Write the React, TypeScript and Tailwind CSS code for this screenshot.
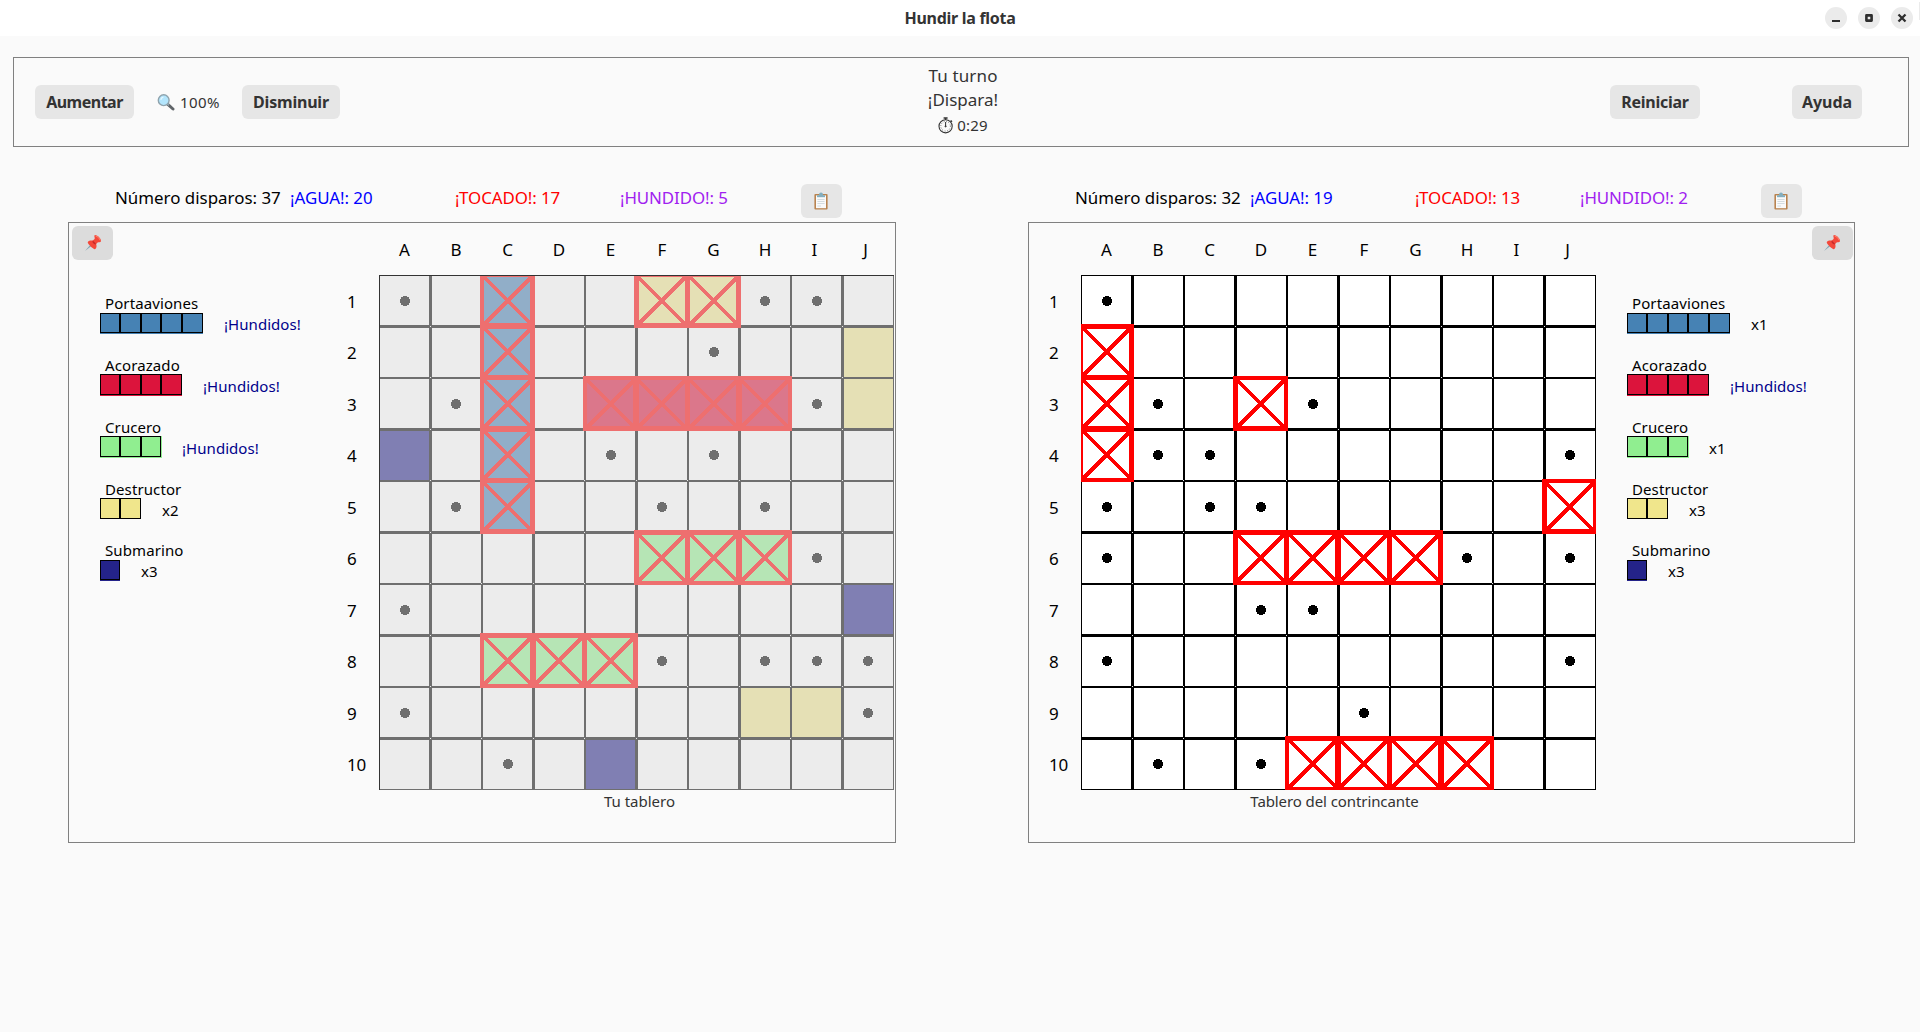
import React from "react";

type Ship = { name: string; size: number; color: string; status: string };

const COLS = ["A", "B", "C", "D", "E", "F", "G", "H", "I", "J"];
const ROWS = ["1", "2", "3", "4", "5", "6", "7", "8", "9", "10"];
const TRACKS = "grid-cols-[52px_51px_52px_51px_52px_51px_52px_51px_52px_51px]";
const ROW_TRACKS = "grid-rows-[52px_51px_52px_51px_52px_51px_52px_51px_52px_51px]";

const OWN_FILL: Record<string, string> = {
  C1: "bg-[#91aec8]", C2: "bg-[#91aec8]", C3: "bg-[#91aec8]", C4: "bg-[#91aec8]", C5: "bg-[#91aec8]",
  E3: "bg-[#db778b]", F3: "bg-[#db778b]", G3: "bg-[#db778b]", H3: "bg-[#db778b]",
  F1: "bg-[#e5e0b5]", G1: "bg-[#e5e0b5]", J2: "bg-[#e5e0b5]", J3: "bg-[#e5e0b5]",
  H9: "bg-[#e5e0b5]", I9: "bg-[#e5e0b5]",
  F6: "bg-[#b6e5b5]", G6: "bg-[#b6e5b5]", H6: "bg-[#b6e5b5]",
  C8: "bg-[#b6e5b5]", D8: "bg-[#b6e5b5]", E8: "bg-[#b6e5b5]",
  A4: "bg-[#807fb3]", J7: "bg-[#807fb3]", E10: "bg-[#807fb3]",
};
const OWN_HITS = "C1 C2 C3 C4 C5 F1 G1 E3 F3 G3 H3 F6 G6 H6 C8 D8 E8".split(" ");
const OWN_MISSES = "A1 H1 I1 G2 B3 I3 E4 G4 B5 F5 H5 I6 A7 F8 H8 I8 J8 A9 J9 C10".split(" ");
const RIVAL_HITS = "A2 A3 A4 D3 J5 D6 E6 F6 G6 E10 F10 G10 H10".split(" ");
const RIVAL_MISSES = "A1 B3 E3 B4 C4 J4 A5 C5 D5 A6 H6 J6 D7 E7 A8 J8 F9 B10 D10".split(" ");

const fleet = (s: string[]): Ship[] => [
  { name: "Portaaviones", size: 5, color: "bg-[#4682b4]", status: s[0] },
  { name: "Acorazado", size: 4, color: "bg-[#dc143c]", status: s[1] },
  { name: "Crucero", size: 3, color: "bg-[#90ee90]", status: s[2] },
  { name: "Destructor", size: 2, color: "bg-[#f0e68c]", status: s[3] },
  { name: "Submarino", size: 1, color: "bg-[#242389]", status: s[4] },
];

function PinIcon() {
  return (
    <svg width="18" height="18" viewBox="0 0 18 18">
      <path d="M6.8 10.2 L8 11.4 L1 17 Z" fill="#7fa3b3" />
      <path d="M10.6 1.2 C12.5 .2 17.6 4.6 17 7.2 C16.4 8.6 14.6 7.8 13.6 8.4 L12.2 10 C13 12.4 12.4 14.6 10.9 15.3 C9 14.8 4 10.4 3.7 8.2 C4.2 6.6 6.6 6.2 8.8 6.6 L10.6 5 C11.2 3.6 9.8 2.4 10.6 1.2Z" fill="#f4483a" />
      <path d="M8.8 6.6 L12.2 10 C11 11.4 7.4 8.6 8.8 6.6Z" fill="#c62828" />
      <path d="M11.6 2 C13.2 2 16 4.8 16.2 6.4" stroke="#ff8a75" strokeWidth="1" fill="none" />
    </svg>
  );
}

function ClipboardIcon() {
  return (
    <svg width="14" height="18" viewBox="0 0 14 18">
      <rect x=".4" y="2" width="13.2" height="15.6" rx="1" fill="#b9834f" />
      <rect x="2" y="3.4" width="10" height="12.8" fill="#fafafa" />
      <path d="M3 3.2h8v2H3z" fill="#82aebf" />
      <path d="M5 2.4a2 2 0 0 1 4 0v1.4H5z" fill="#82aebf" />
      <path d="M3.4 7.5h7.2M3.4 9.5h7.2M3.4 11.5h7.2M3.4 14h3.6" stroke="#cfd8dc" strokeWidth=".9" />
    </svg>
  );
}

function SearchIcon() {
  return (
    <svg width="18" height="17" viewBox="0 0 18 17">
      <path d="M10.6 10.2 L16 15" stroke="#5f6468" strokeWidth="3" strokeLinecap="round" />
      <path d="M10 9.6 L12 11.4" stroke="#90a4ae" strokeWidth="1.6" />
      <circle cx="6.7" cy="6.2" r="5.4" fill="#b3e5fc" stroke="#8fa3ad" strokeWidth="1.4" />
      <path d="M3.8 5.8 A3 3 0 0 1 6.4 3.2" stroke="#e8f8ff" strokeWidth="1.2" fill="none" />
    </svg>
  );
}

function StopwatchIcon() {
  return (
    <svg width="16" height="17" viewBox="0 0 16 17" fill="none" stroke="#333">
      <circle cx="7.6" cy="9.3" r="6.6" strokeWidth="1.1" />
      <path d="M5.6 1h4M7.6 1v2M12.6 3.4l1.4 1.3" strokeWidth="1.4" />
      <path d="M7.6 5v4.8" strokeWidth="1" />
      <circle cx="7.6" cy="9.3" r=".6" strokeWidth="1" />
      <circle cx="7.6" cy="9.3" r="4.8" strokeWidth=".9" strokeDasharray=".7 1.82" />
    </svg>
  );
}

function Button({ children, className }: { children: React.ReactNode; className: string }) {
  return (
    <button className={`flex h-[34px] items-center justify-center rounded-[6px] text-[16px] font-bold text-[#333] ${className}`}>
      {children}
    </button>
  );
}

function Cell({ c, r, fill, hit, miss, own }: { c: number; r: number; fill: string; hit: boolean; miss: boolean; own: boolean }) {
  const oddC = c % 2 === 1;
  const oddR = r % 2 === 1;
  const mark = own ? "#ee6f6f" : "#ff0000";
  return (
    <div
      className={`relative border-t border-l ${oddC ? "border-r" : "border-r-2"} ${oddR ? "border-b" : "border-b-2"} ${own ? "border-[#6f6f6f]" : "border-black"} ${fill} ${hit ? "z-10" : ""}`}
    >
      {c < 9 && r < 9 && (
        <span
          className={`absolute bg-[#ececec] ${oddC ? "-right-[2px] w-[2px]" : "-right-[2px] w-px"} ${oddR ? "-bottom-[2px] h-[2px]" : "-bottom-[2px] h-px"}`}
        />
      )}
      {miss && (
        <svg
          className={`absolute ${oddC ? "left-[19px]" : "left-[20px]"} ${oddR ? "top-[19px]" : "top-[20px]"}`}
          width="10" height="10" viewBox="0 0 10 10" shapeRendering="crispEdges"
        >
          <circle cx="5" cy="5" r="5.1" fill={own ? "#6f6f6f" : "#000"} />
        </svg>
      )}
      {hit && (
        <svg
          className={`absolute max-w-none ${oddC ? "-left-[4px]" : "-left-[3px]"} ${oddR ? "-top-[4px]" : "-top-[3px]"}`}
          width="55" height="55" viewBox="0 0 55 55" shapeRendering="crispEdges"
        >
          <path
            fillRule="evenodd" fill={mark}
            d={`M0 0H55V55H0Z M${oddC ? 5 : 4} ${oddR ? 5 : 4}V${oddR ? 51 : 50}H${oddC ? 51 : 50}V${oddR ? 5 : 4}Z`}
          />
          <path d="M2.5 2.5L53 53M53 2.5L2.5 53" stroke={mark} strokeWidth="3.6" />
        </svg>
      )}
    </div>
  );
}

const labelShift = (c: string) => (c === "I" ? "pr-[5px]" : c === "J" ? "pr-[6px]" : "pr-px");

function Board({ own, caption }: { own: boolean; caption: string }) {
  const hits = own ? OWN_HITS : RIVAL_HITS;
  const misses = own ? OWN_MISSES : RIVAL_MISSES;
  return (
    <div className="flex shrink-0">
      <div className={`grid w-8 shrink-0 pt-[52px] text-[17px] tracking-[-0.2px] ${ROW_TRACKS}`}>
        {ROWS.map((r) => (
          <div key={r} className="flex items-center leading-none">{r}</div>
        ))}
      </div>
      <div className="flex w-[515px] flex-col">
        <div className={`grid h-[52px] shrink-0 text-[17px] ${TRACKS}`}>
          {COLS.map((c) => (
            <div key={c} className={`flex items-center justify-center leading-none ${labelShift(c)}`}>{c}</div>
          ))}
        </div>
        <div className={`relative grid h-[515px] w-[515px] shrink-0 overflow-hidden ${TRACKS} ${ROW_TRACKS}`}>
          {ROWS.map((r, ri) =>
            COLS.map((c, ci) => (
              <Cell
                key={c + r} c={ci} r={ri} own={own}
                fill={own ? OWN_FILL[c + r] ?? "bg-[#ececec]" : "bg-white"}
                hit={hits.includes(c + r)} miss={misses.includes(c + r)}
              />
            ))
          )}
          {own && <div className="pointer-events-none absolute inset-0 z-20 border-t border-l border-[#333]" />}
        </div>
        <div className={`mt-px text-center text-[15px] leading-5 text-[#333] ${own ? "pl-[6px]" : "pr-[8px] tracking-[-0.09px]"}`}>
          {caption}
        </div>
      </div>
    </div>
  );
}

const SEG_W = ["w-5", "w-[21px]", "w-5", "w-[21px]", "w-[21px]"];

function Legend({ ships }: { ships: Ship[] }) {
  return (
    <div className="flex flex-col">
      {ships.map((s, i) => {
        const short = i === 0 || i === 4;
        return (
          <div key={s.name} className={`flex flex-col ${i === 0 ? "h-[61px]" : "h-[62px]"}`}>
            <div className={`h-5 pl-[5px] text-[15px] leading-5 tracking-[0.1px] text-black ${short ? "" : "pt-px"}`}>{s.name}</div>
            <div className="flex">
              <div className={`flex self-start ${s.color} ${i === 3 ? "" : "pb-px"} ${i === 2 ? "pr-px" : ""}`}>
                {SEG_W.slice(0, s.size).map((w, k) => (
                  <div key={k} className={`border border-black ${w} ${short ? "h-5" : "h-[21px]"}`} />
                ))}
              </div>
              <div className={`text-[15px] leading-5 tracking-[0.05px] ${short ? "pt-px" : "pt-[2px]"} ${i === 2 ? "pl-5" : "pl-[21px]"} ${s.status[0] === "x" ? "text-black" : "text-[#00008b]"}`}>
                {s.status}
              </div>
            </div>
          </div>
        );
      })}
    </div>
  );
}

function Stats({ shots, water, hit, sunk }: { shots: number; water: number; hit: number; sunk: number }) {
  return (
    <div className="flex h-[38px] pl-[47px] text-[16.9px] leading-6 whitespace-nowrap">
      <span className="w-[175px] pt-[2px] text-black">Número disparos: {shots}</span>
      <span className="w-[165px] pt-[2px] tracking-[-0.05px] text-[#0000ff]">¡AGUA!: {water}</span>
      <span className="w-[165px] pt-[2px] tracking-[-0.1px] text-[#ff0000]">¡TOCADO!: {hit}</span>
      <span className="w-[181px] pt-[2px] tracking-[-0.1px] text-[#a020f0]">¡HUNDIDO!: {sunk}</span>
      <Button className="w-[41px] bg-[#e6e6e6] pr-px pb-px"><ClipboardIcon /></Button>
    </div>
  );
}

export default function App() {
  return (
    <div className="flex h-[1032px] w-[1920px] flex-col overflow-hidden bg-[#fafafa] font-['Noto_Sans',sans-serif]">
      <header className="relative flex h-9 shrink-0 items-center justify-center bg-white">
        <h1 className="pb-px text-[16px] leading-6 font-bold tracking-[-0.28px] text-[#333]">Hundir la flota</h1>
        <div className="absolute top-[7px] right-[7px] flex gap-[11px]">
          <svg width="22" height="22" viewBox="0 0 22 22"><circle cx="11" cy="11" r="11" fill="#ebebeb" /><path d="M7 13h8v2H7z" fill="#2e2e2e" /></svg>
          <svg width="22" height="22" viewBox="0 0 22 22"><circle cx="11" cy="11" r="11" fill="#ebebeb" /><rect x="8.4" y="8.4" width="5.2" height="5.2" fill="none" stroke="#2e2e2e" strokeWidth="2.6" strokeLinejoin="round" /></svg>
          <svg width="22" height="22" viewBox="0 0 22 22"><circle cx="11" cy="11" r="11" fill="#ebebeb" /><path d="M7.5 7.5l7 7M14.5 7.5l-7 7" stroke="#2e2e2e" strokeWidth="2.3" /></svg>
        </div>
        <div className="absolute top-[2px] right-0 h-[18px] w-px bg-[#ebebeb]" />
      </header>

      <section className="mt-[21px] ml-[13px] flex h-[90px] w-[1896px] shrink-0 items-start border border-[#808080] text-[#333]">
        <div className="flex w-[780px] items-center pt-[27px] pl-[21px]">
          <Button className="w-[99px] bg-[#e6e6e6] tracking-[-0.5px]">Aumentar</Button>
          <div className="flex w-[108px] items-center pl-[23px]">
            <SearchIcon />
            <span className="pl-[5px] text-[15px] tracking-[0.4px]">100%</span>
          </div>
          <Button className="w-[98px] bg-[#e6e6e6] tracking-[-0.2px]">Disminuir</Button>
        </div>
        <div className="flex w-[338px] flex-col items-center pt-[6px] text-[17px] leading-6">
          <span className="tracking-[0.15px]">Tu turno</span>
          <span>¡Dispara!</span>
          <div className="flex items-center gap-[3px] pt-px text-[15px]">
            <StopwatchIcon />
            <span className="tracking-[0.2px]">0:29</span>
          </div>
        </div>
        <div className="flex pt-[27px] pl-[478px]">
          <Button className="w-[90px] bg-[#e6e6e6] tracking-[-0.25px]">Reiniciar</Button>
          <Button className="ml-[92px] w-[70px] bg-[#e6e6e6] tracking-[-0.1px]">Ayuda</Button>
        </div>
      </section>

      <main className="flex pt-[37px] pl-[68px]">
        <div className="w-[960px]">
          <Stats shots={37} water={20} hit={17} sunk={5} />
          <section className="flex h-[621px] w-[828px] border border-[#808080]">
            <div className="flex w-[278px] shrink-0 flex-col pt-[3px] pl-[3px]">
              <Button className="w-[41px] bg-[#dcdcdc] pb-px"><PinIcon /></Button>
              <div className="pt-[33px] pl-7">
                <Legend ships={fleet(["¡Hundidos!", "¡Hundidos!", "¡Hundidos!", "x2", "x3"])} />
              </div>
            </div>
            <Board own caption="Tu tablero" />
          </section>
        </div>
        <div className="w-[892px]">
          <Stats shots={32} water={19} hit={13} sunk={2} />
          <section className="flex h-[621px] w-[827px] border border-[#808080]">
            <div className="w-5 shrink-0" />
            <Board own={false} caption="Tablero del contrincante" />
            <div className="flex flex-1 flex-col pt-[3px] pr-px">
              <Button className="w-[41px] self-end bg-[#dcdcdc] pr-px pb-px"><PinIcon /></Button>
              <div className="pt-[33px] pl-[31px]">
                <Legend ships={fleet(["x1", "¡Hundidos!", "x1", "x3", "x3"])} />
              </div>
            </div>
          </section>
        </div>
      </main>
    </div>
  );
}
